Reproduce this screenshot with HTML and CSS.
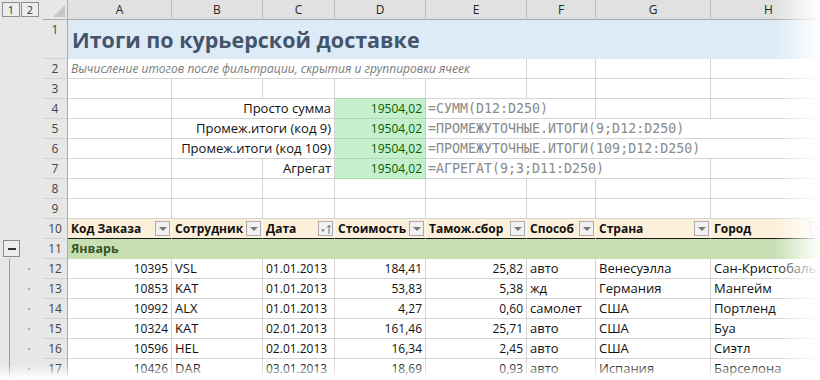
FILE: index.html
```html
<!DOCTYPE html>
<html lang="ru">

<head>
	<meta charset="UTF-8">
	<meta name="viewport" content="width=device-width, initial-scale=1.0">
	<title>Итоги по курьерской доставке</title>
	<link rel="stylesheet" href="styles.css">
</head>

<body>
	<div class="sheet">
		<div class="row colhead">
			<div class="gut levels"><span class="lvl">1</span><span class="lvl">2</span></div>
			<div class="corner"><span class="tri"></span></div>
			<div class="ch">A</div>
			<div class="ch">B</div>
			<div class="ch">C</div>
			<div class="ch">D</div>
			<div class="ch">E</div>
			<div class="ch">F</div>
			<div class="ch">G</div>
			<div class="ch">H</div>
		</div>

		<div class="row r-title">
			<div class="gut"></div>
			<div class="rh">1</div>
			<div class="c title s8">Итоги по курьерской доставке</div>
		</div>

		<div class="row">
			<div class="gut"></div>
			<div class="rh">2</div>
			<div class="c subtitle s5">Вычисление итогов после фильтрации, скрытия и группировки ячеек</div>
			<div class="c"></div>
			<div class="c"></div>
			<div class="c"></div>
		</div>

		<div class="row">
			<div class="gut"></div>
			<div class="rh">3</div>
			<div class="c"></div>
			<div class="c"></div>
			<div class="c"></div>
			<div class="c good-top"></div>
			<div class="c"></div>
			<div class="c"></div>
			<div class="c"></div>
			<div class="c"></div>
		</div>

		<div class="row">
			<div class="gut"></div>
			<div class="rh">4</div>
			<div class="c"></div>
			<div class="c s2 r">Просто сумма</div>
			<div class="c good num">19504,02</div>
			<div class="c formula s2">=СУММ(D12:D250)</div>
			<div class="c"></div>
			<div class="c"></div>
		</div>

		<div class="row">
			<div class="gut"></div>
			<div class="rh">5</div>
			<div class="c"></div>
			<div class="c s2 r">Промеж.итоги (код 9)</div>
			<div class="c good num">19504,02</div>
			<div class="c formula s4">=ПРОМЕЖУТОЧНЫЕ.ИТОГИ(9;D12:D250)</div>
		</div>

		<div class="row">
			<div class="gut"></div>
			<div class="rh">6</div>
			<div class="c"></div>
			<div class="c s2 r">Промеж.итоги (код 109)</div>
			<div class="c good num">19504,02</div>
			<div class="c formula s4">=ПРОМЕЖУТОЧНЫЕ.ИТОГИ(109;D12:D250)</div>
		</div>

		<div class="row">
			<div class="gut"></div>
			<div class="rh">7</div>
			<div class="c"></div>
			<div class="c"></div>
			<div class="c r">Агрегат</div>
			<div class="c good num">19504,02</div>
			<div class="c formula s3">=АГРЕГАТ(9;3;D11:D250)</div>
			<div class="c"></div>
		</div>

		<div class="row">
			<div class="gut"></div>
			<div class="rh">8</div>
			<div class="c"></div>
			<div class="c"></div>
			<div class="c"></div>
			<div class="c"></div>
			<div class="c"></div>
			<div class="c"></div>
			<div class="c"></div>
			<div class="c"></div>
		</div>

		<div class="row">
			<div class="gut"></div>
			<div class="rh">9</div>
			<div class="c"></div>
			<div class="c"></div>
			<div class="c"></div>
			<div class="c"></div>
			<div class="c"></div>
			<div class="c"></div>
			<div class="c"></div>
			<div class="c"></div>
		</div>

		<div class="row thead">
			<div class="gut"></div>
			<div class="rh">10</div>
			<div class="c th">Код Заказа <span class="fb"><i></i></span></div>
			<div class="c th">Сотрудник <span class="fb"><i></i></span></div>
			<div class="c th">Дата
				<span class="fb sort">
					<svg width="12" height="12" viewBox="0 0 12 12">
						<path d="M1 6.5h4l-2 2.5z" fill="#7a7a7a" />
						<path d="M9 11V2.5M7.2 4.3L9 2.3l1.8 2" stroke="#6a6a6a" stroke-width="1" fill="none" />
					</svg>
				</span>
			</div>
			<div class="c th">Стоимость <span class="fb"><i></i></span></div>
			<div class="c th">Тамож.сбор <span class="fb"><i></i></span></div>
			<div class="c th">Способ <span class="fb"><i></i></span></div>
			<div class="c th">Страна <span class="fb"><i></i></span></div>
			<div class="c th">Город <span class="fb"><i></i></span></div>
		</div>

		<div class="row">
			<div class="gut"><span class="collapse"><i></i></span></div>
			<div class="rh">11</div>
			<div class="c group s8">Январь</div>
		</div>

		<div class="row">
			<div class="gut tree"><span class="dot"></span></div>
			<div class="rh">12</div>
			<div class="c num">10395</div>
			<div class="c">VSL</div>
			<div class="c num-l">01.01.2013</div>
			<div class="c num">184,41</div>
			<div class="c num">25,82</div>
			<div class="c">авто</div>
			<div class="c">Венесуэлла</div>
			<div class="c">Сан-Кристобаль</div>
		</div>

		<div class="row">
			<div class="gut tree"><span class="dot"></span></div>
			<div class="rh">13</div>
			<div class="c num">10853</div>
			<div class="c">KAT</div>
			<div class="c num-l">01.01.2013</div>
			<div class="c num">53,83</div>
			<div class="c num">5,38</div>
			<div class="c">жд</div>
			<div class="c">Германия</div>
			<div class="c">Мангейм</div>
		</div>

		<div class="row">
			<div class="gut tree"><span class="dot"></span></div>
			<div class="rh">14</div>
			<div class="c num">10992</div>
			<div class="c">ALX</div>
			<div class="c num-l">01.01.2013</div>
			<div class="c num">4,27</div>
			<div class="c num">0,60</div>
			<div class="c">самолет</div>
			<div class="c">США</div>
			<div class="c">Портленд</div>
		</div>

		<div class="row">
			<div class="gut tree"><span class="dot"></span></div>
			<div class="rh">15</div>
			<div class="c num">10324</div>
			<div class="c">KAT</div>
			<div class="c num-l">02.01.2013</div>
			<div class="c num">161,46</div>
			<div class="c num">25,71</div>
			<div class="c">авто</div>
			<div class="c">США</div>
			<div class="c">Буа</div>
		</div>

		<div class="row">
			<div class="gut tree"><span class="dot"></span></div>
			<div class="rh">16</div>
			<div class="c num">10596</div>
			<div class="c">HEL</div>
			<div class="c num-l">02.01.2013</div>
			<div class="c num">16,34</div>
			<div class="c num">2,45</div>
			<div class="c">авто</div>
			<div class="c">США</div>
			<div class="c">Сиэтл</div>
		</div>

		<div class="row">
			<div class="gut tree"><span class="dot"></span></div>
			<div class="rh">17</div>
			<div class="c num">10426</div>
			<div class="c">DAR</div>
			<div class="c num-l">03.01.2013</div>
			<div class="c num">18,69</div>
			<div class="c num">0,93</div>
			<div class="c">авто</div>
			<div class="c">Испания</div>
			<div class="c">Барселона</div>
		</div>
	</div>

	<div class="fade-right"></div>
	<div class="fade-bottom"></div>
</body>

</html>
```

FILE: styles.css
```css
* {
	margin: 0;
	padding: 0;
	box-sizing: border-box;
}

body {
	width: 820px;
	height: 380px;
	overflow: hidden;
	position: relative;
	background: #fff;
	font-family: 'Open Sans', 'Liberation Sans', sans-serif;
	font-size: 13px;
	color: #111;
}

.sheet {
	--cols: 43px 25px 104px 91px 72px 91px 101px 69px 115px 116px;
}

.row {
	display: grid;
	grid-template-columns: var(--cols);
	height: 20px;
}

.row > div {
	border-right: 1px solid #d4d4d4;
	border-bottom: 1px solid #d4d4d4;
	padding: 0 3px;
	line-height: 19px;
	white-space: nowrap;
}

.s2 { grid-column: span 2; }
.s3 { grid-column: span 3; }
.s4 { grid-column: span 4; }
.s5 { grid-column: span 5; }
.s8 { grid-column: span 8; }

.r {
	text-align: right;
}

.num {
	text-align: right;
	font-size: 12px;
}

.num-l {
	font-size: 12px;
}

/* outline gutter */
.row > .gut {
	border: none;
	background: #e7e7e7;
	padding: 0;
}

.levels {
	display: flex;
	gap: 1px;
	padding: 2px 0 0 2px !important;
}

.lvl {
	width: 18px;
	height: 15px;
	border: 1px solid #8e8e8e;
	background: #ececec;
	font-size: 11px;
	line-height: 13px;
	text-align: center;
	color: #333;
}

.collapse {
	display: flex;
	align-items: center;
	justify-content: center;
	width: 17px;
	height: 17px;
	margin: 1px 0 0 3px;
	border: 1px solid #8a8a8a;
	background: #ededed;
}

.collapse i {
	width: 8px;
	height: 2px;
	background: #333;
}

.tree {
	display: flex;
	align-items: center;
	padding-left: 9px !important;
}

.tree::before {
	content: '';
	align-self: stretch;
	width: 1px;
	background: #9c9c9c;
}

.dot {
	width: 2px;
	height: 2px;
	margin-left: 18px;
	background: #a5a5a5;
}

/* headers */
.row > .corner {
	display: flex;
	align-items: flex-end;
	justify-content: flex-end;
	padding: 0 2px 2px 0;
	background: #e7e7e7;
	border-right-color: #ababab;
	border-bottom-color: #ababab;
}

.tri {
	width: 0;
	height: 0;
	border-left: 12px solid transparent;
	border-bottom: 12px solid #c6c6c6;
}

.row > .ch {
	background: #e1e1e1;
	border-right-color: #bcbcbc;
	border-bottom-color: #a8a8a8;
	text-align: center;
	font-size: 12px;
	color: #262626;
}

.row > .rh {
	background: #e7e7e7;
	border-right-color: #ababab;
	border-bottom-color: #d2d2d2;
	padding: 0;
	text-align: center;
	font-size: 12px;
	color: #444;
}

/* title block */
.r-title {
	height: 39px;
}

.row > .title {
	background: #ddebf7;
	border: none;
	font-size: 21.5px;
	font-weight: bold;
	line-height: 39px;
	color: #44546a;
	padding-left: 4px;
}

.subtitle {
	font-style: italic;
	font-size: 12px;
	color: #7b7b7b;
}

.row > .good {
	background: #c6efce;
	color: #006100;
	border-bottom-color: #a9dbb1;
	border-right-color: #a9dbb1;
}

.row > .good-top {
	border-bottom-color: #a9dbb1;
}

.formula {
	font-family: 'DejaVu Sans Mono', 'Liberation Mono', monospace;
	font-size: 13.3px;
	color: #8a8a8a;
	padding-left: 2px !important;
}

/* table */
.row > .th {
	display: flex;
	align-items: center;
	justify-content: space-between;
	background: #fcf0da;
	border-right-color: #fff8ec;
	border-bottom: 1px solid #1a1a1a;
	padding-right: 1px;
	font-size: 12px;
	font-weight: bold;
}

.fb {
	display: flex;
	align-items: center;
	justify-content: center;
	flex: none;
	width: 15px;
	height: 15px;
	border: 1px solid #acacac;
	background: #f1f1f1;
}

.fb i {
	width: 0;
	height: 0;
	border-left: 4px solid transparent;
	border-right: 4px solid transparent;
	border-top: 4px solid #777;
}

.row > .group {
	background: #c6e0b4;
	border-bottom-color: #c6e0b4;
	font-size: 12.5px;
	font-weight: bold;
	color: #375623;
}

/* soft edges of the picture */
.fade-right {
	position: absolute;
	top: 0;
	right: 0;
	width: 46px;
	height: 100%;
	background: linear-gradient(to right, rgba(255, 255, 255, 0), rgba(255, 255, 255, 0.55) 55%, #fff 100%);
}

.fade-bottom {
	position: absolute;
	left: 0;
	bottom: 0;
	width: 100%;
	height: 16px;
	background: linear-gradient(to bottom, rgba(255, 255, 255, 0), #fff 95%);
}
```
